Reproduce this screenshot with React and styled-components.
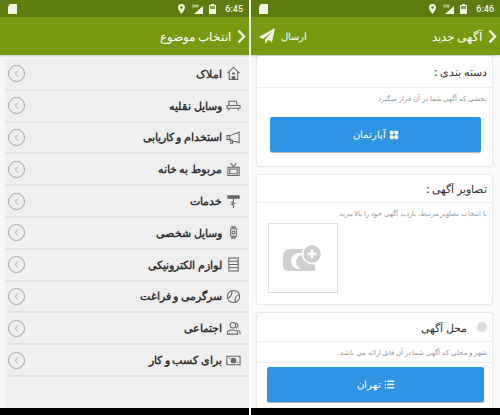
import React from 'react';
import styled, { createGlobalStyle } from 'styled-components';
import { ChevronLeft, LayoutGrid, List } from 'lucide-react';

const Global = createGlobalStyle`
  html, body { margin: 0; padding: 0; background: #fff; }
  body { width: 500px; height: 415px; overflow: hidden; font-family: "Noto Sans", "Liberation Sans", sans-serif; }
`;

const Page = styled.div`
  display: flex;
  justify-content: space-between;
  width: 500px;
  height: 415px;
`;

const Phone = styled.div`
  display: flex;
  flex-direction: column;
  width: 249px;
  height: 415px;
  background: ${p => p.$bg};
`;

const StatusBar = styled.div`
  display: flex;
  align-items: center;
  justify-content: space-between;
  flex: 0 0 17px;
  padding: 0 6px 0 8px;
  background: #5c7d0e;
  color: #f2f5e6;
`;

const StatusRight = styled.div`
  display: flex;
  align-items: center;
  gap: 6px;
`;

const Clock = styled.span`
  margin-left: 3px;
  font: 500 9px "Roboto", sans-serif;
`;

const AppBar = styled.div`
  display: flex;
  align-items: center;
  justify-content: ${p => p.$split ? 'space-between' : 'flex-end'};
  flex: 0 0 38px;
  padding: 0 3px 0 8px;
  background: #779a10;
  color: #fff;
  box-shadow: 0 1px 2px rgba(0, 0, 0, .2);
`;

const Title = styled.div`
  display: flex;
  align-items: center;
  gap: 6px;
  font-size: 11.5px;
`;

const SendBox = styled.div`
  display: flex;
  align-items: center;
  gap: 6px;
  font-size: 9.5px;
`;

const RowList = styled.div`
  display: flex;
  flex-direction: column;
  flex: 0 0 auto;
  margin: 4px 0 0 5px;
  background: #efefef;
`;

const Row = styled.div`
  box-sizing: border-box;
  display: flex;
  align-items: center;
  justify-content: space-between;
  height: 31.8px;
  padding: 0 8px 0 3px;
  border-bottom: 2px solid #e4e4e4;
`;

const Round = styled.div`
  display: flex;
  align-items: center;
  justify-content: center;
  width: 15px;
  height: 15px;
  border: 1px solid #a3a3a3;
  border-radius: 50%;
  color: #8a8a8a;
`;

const RowRight = styled.div`
  display: flex;
  align-items: center;
  gap: 4px;
  font-size: 10.5px;
  font-weight: 600;
  color: #333;
`;

const RowIcon = styled.svg`
  width: 15px;
  height: 15px;
  fill: none;
  stroke: #666;
  stroke-width: 1.1;
`;

const Fill = styled.div`
  flex: 1;
  margin-left: 5px;
  background: #efefef;
`;

const BlackStrip = styled.div`
  flex: 0 0 7px;
  background: #000;
`;

const Scroll = styled.div`
  display: flex;
  flex-direction: column;
  flex: 1;
  gap: 9px;
  padding: 1px 8px 0 6px;
  min-height: 0;
  overflow: hidden;
`;

const Card = styled.div`
  display: flex;
  flex-direction: column;
  flex: 0 0 auto;
  background: #fff;
  border-radius: 2px;
  box-shadow: 0 0 2px rgba(0, 0, 0, .25);
`;

const CardHead = styled.div`
  display: flex;
  align-items: center;
  direction: rtl;
  gap: 10px;
  height: ${p => p.$h}px;
  padding: 0 5px;
  font-size: 11px;
  font-weight: 500;
  color: #333;
  border-bottom: 1px solid #eee;
`;

const Hint = styled.div`
  height: 12px;
  padding: 5px 5px ${p => p.$line ? '3px' : '0'};
  direction: rtl;
  line-height: 12px;
  font-size: ${p => p.$size}px;
  color: #999;
  border-bottom: ${p => p.$line ? '1px solid #eee' : 'none'};
`;

const BlueButton = styled.div`
  display: flex;
  align-items: center;
  justify-content: center;
  gap: 3px;
  height: 35px;
  margin: ${p => p.$m};
  background: #2f94e3;
  border-radius: 2px;
  color: #fff;
  font-size: 9.5px;
  box-shadow: 0 1px 1px rgba(0, 0, 0, .3);
`;

const PhotoBox = styled.div`
  display: flex;
  align-items: center;
  justify-content: center;
  width: 68px;
  height: 68px;
  margin: 3px 0 11px 11px;
  border: 1px solid #ddd;
`;

const Dot = styled.div`
  width: 10px;
  height: 10px;
  border-radius: 50%;
  background: #dcdcdc;
`;

const ROW_ICONS = {
  home: <><path d="M1.500 7.500 8 1.500l6.500 6M3.500 6V14.500h9V6" /><path d="M6.500 7h3v2h-3zM6 14v-3h4v3" fill="#666" stroke="none" /></>,
  car: <path d="M3 3.500h8l1 4.500H3zM1 8h14v3H1zM3 11v2.500M13 11v2.500" />,
  horn: <path d="M1 6h3v4H1zM4 6l10-3.500v11L4 10M5 10v4h2v-3.500" />,
  tv: <path d="M2 5.500h12v9H2zM5 1l3 4.500L11 1M4 7.500h8v5H4z" />,
  roller: <><path d="M2 2h12v2.500H2z" fill="#666" /><path d="M8 4.500V8M8 8l-2 1 3 1-3 1 2 1v3" /></>,
  watch: <><path d="M5 4h6v8H5z" /><path d="M5.500 4V1h5v3zM5.500 12v3h5v-3z" fill="#888" stroke="none" /><circle cx="8" cy="8" r="1.500" /></>,
  phone: <path d="M3 1h10v14H3zM3 4.500h10M3 8h10M3 11.500h10" />,
  ball: <><circle cx="8" cy="8" r="6.500" /><path d="M6 1.800C7 5 5.500 8 2 10M14 6C10.500 7 9 10 10 14.200" /></>,
  people: <><circle cx="7.500" cy="4.500" r="3" /><path d="M1.500 14v-1.500C1.500 10.500 4 9.500 7 9.500s5.500 1 5.500 3V14zM11 2a3 3 0 0 1 0 5.500M13 9.500c1.500.5 2 1.500 2 3v1.500" /></>,
  cash: <><path d="M1 3.500h14v9H1z" /><circle cx="8" cy="8" r="2.500" fill="#666" /><path d="M3 5.500h1.500M11.500 10.500H13" /></>,
};

const items = [
  ['املاک', 'home'],
  ['وسایل نقلیه', 'car'],
  ['استخدام و کاریابی', 'horn'],
  ['مربوط به خانه', 'tv'],
  ['خدمات', 'roller'],
  ['وسایل شخصی', 'watch'],
  ['لوازم الکترونیکی', 'phone'],
  ['سرگرمی و فراغت', 'ball'],
  ['اجتماعی', 'people'],
  ['برای کسب و کار', 'cash'],
];

function Status({ time }) {
  return (
    <StatusBar>
      <svg width="9" height="10" viewBox="0 0 9 10"><path d="M2 0h7v10H0V2.500z" fill="#f2f5e6" /></svg>
      <StatusRight>
        <svg width="7" height="10" viewBox="0 0 7 10">
          <path d="M3.500 0a3.500 3.500 0 0 1 3.500 3.500C7 6 3.500 10 3.500 10S0 6 0 3.500A3.500 3.500 0 0 1 3.500 0z" fill="#f2f5e6" />
          <circle cx="3.500" cy="3.500" r="1.300" fill="#5c7d0e" />
        </svg>
        <svg width="12" height="10" viewBox="0 0 12 10">
          <path d="M12 2v8H3z" fill="#f2f5e6" />
          <path d="M1 1h3M4 1v2H1M5 1h2v2H5z" stroke="#f2f5e6" strokeWidth=".7" fill="none" />
        </svg>
        <svg width="7" height="10" viewBox="0 0 7 10">
          <path d="M2 0h3v1h2v9H0V1h2z" fill="#f2f5e6" />
          <path d="M1 2h5v3H1z" fill="#8ca15a" />
        </svg>
        <Clock>{time}</Clock>
      </StatusRight>
    </StatusBar>
  );
}

function BackArrow() {
  return (
    <svg width="9" height="15" viewBox="0 0 9 15">
      <path d="M1.500 1.500 7 7.500l-5.500 6" fill="none" stroke="#f4f7e8" strokeWidth="2.400" />
    </svg>
  );
}

function Plane() {
  return (
    <svg width="16" height="16" viewBox="0 0 16 16">
      <path d="M0 9 16 0l-3 14-4-2-3 4v-4.500L13 4 4 11z" fill="#f4f7e8" />
    </svg>
  );
}

function Camera() {
  return (
    <svg width="42" height="30" viewBox="0 0 42 30">
      <path d="M8 6h14l3 4v18H6a5 5 0 0 1-5-5V13a7 7 0 0 1 7-7z" fill="#cfcfcf" />
      <path d="M24 12h9v16H22z" fill="#cfcfcf" />
      <circle cx="17" cy="18" r="8" fill="#fff" />
      <circle cx="21" cy="19" r="7" fill="#cfcfcf" />
      <circle cx="30" cy="11" r="9.500" fill="#cfcfcf" stroke="#fff" strokeWidth="1.500" />
      <path d="M30 6.500v9M25.500 11h9" stroke="#fff" strokeWidth="2.500" />
    </svg>
  );
}

export default function App() {
  return (
    <Page>
      <Global />
      <Phone $bg="#f7f7f7">
        <Status time="6:45" />
        <AppBar>
          <Title>انتخاب موضوع<BackArrow /></Title>
        </AppBar>
        <RowList>
          {items.map(([label, icon]) => (
            <Row key={label}>
              <Round><ChevronLeft size={11} strokeWidth={1.5} /></Round>
              <RowRight>
                <span>{label}</span>
                <RowIcon viewBox="0 0 16 16">{ROW_ICONS[icon]}</RowIcon>
              </RowRight>
            </Row>
          ))}
        </RowList>
        <Fill />
        <BlackStrip />
      </Phone>
      <Phone $bg="#fafafa">
        <Status time="6:46" />
        <AppBar $split>
          <SendBox>
            <Plane />
            <span>ارسال</span>
          </SendBox>
          <Title>آگهی جدید<BackArrow /></Title>
        </AppBar>
        <Scroll>
          <Card>
            <CardHead $h={31}>دسته بندی :</CardHead>
            <Hint $size={7}>بخشی که آگهی شما در آن قرار میگیرد</Hint>
            <BlueButton $m="12px 11px 14px 13px">آپارتمان<LayoutGrid size={10} fill="#fff" /></BlueButton>
          </Card>
          <Card>
            <CardHead $h={27}>تصاویر آگهی :</CardHead>
            <Hint $size={7}>با انتخاب تصاویر مرتبط، بازدید آگهی خود را بالا ببرید</Hint>
            <PhotoBox><Camera /></PhotoBox>
          </Card>
          <Card>
            <CardHead $h={28}><Dot />محل آگهی</CardHead>
            <Hint $size={6.6} $line>شهر و محلی که آگهی شما در آن قابل ارائه می باشد.</Hint>
            <BlueButton $m="4px 8px 8px 10px">تهران<List size={11} strokeWidth={3} /></BlueButton>
          </Card>
        </Scroll>
        <BlackStrip />
      </Phone>
    </Page>
  );
}
